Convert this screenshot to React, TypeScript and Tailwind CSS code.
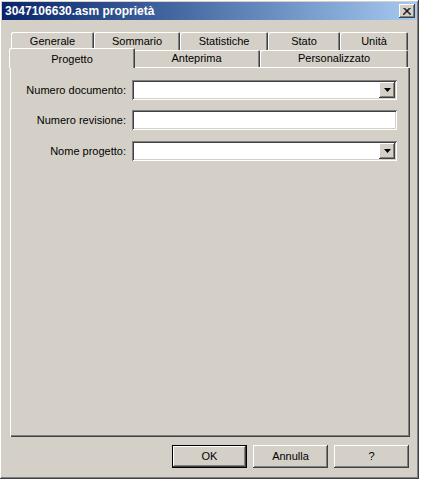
const raised =
  "shadow-[inset_-1px_-1px_#404040,inset_1px_1px_#ffffff,inset_-2px_-2px_#808080,inset_2px_2px_#d4d0c8]";
const sunken =
  "shadow-[inset_1px_1px_#808080,inset_-1px_-1px_#ffffff,inset_2px_2px_#404040,inset_-2px_-2px_#d4d0c8]";
const tabEdge =
  "shadow-[inset_1px_1px_#ffffff,inset_-1px_0_#404040,inset_-2px_0_#808080]";

const backRow = [
  { label: "Generale", w: "w-[83px]" },
  { label: "Sommario", w: "w-[86px]" },
  { label: "Statistiche", w: "w-[88px]" },
  { label: "Stato", w: "w-[72px]" },
  { label: "Unità", w: "w-[68px]" },
];

function Arrow() {
  return (
    <svg width="7" height="4" viewBox="0 0 7 4">
      <polygon points="0,0 7,0 3.5,4" fill="#000" />
    </svg>
  );
}

function Field({ combo }: { combo?: boolean }) {
  return (
    <div className={`w-[265px] h-[20px] bg-white flex justify-end p-[2px] ${sunken}`}>
      {combo && (
        <div className={`w-[16px] h-[16px] bg-[#d4d0c8] flex items-center justify-center ${raised}`}>
          <Arrow />
        </div>
      )}
    </div>
  );
}

function Row({ label, combo, className }: { label: string; combo?: boolean; className?: string }) {
  return (
    <div className={`flex items-center gap-[6px] ${className ?? ""}`}>
      <div className="w-[116px] text-right">{label}</div>
      <Field combo={combo} />
    </div>
  );
}

function Button({ children, isDefault }: { children: React.ReactNode; isDefault?: boolean }) {
  const edge = isDefault
    ? "shadow-[inset_0_0_0_1px_#000000,inset_-2px_-2px_#404040,inset_2px_2px_#ffffff,inset_-3px_-3px_#808080]"
    : raised;
  return (
    <div className={`w-[75px] h-[23px] bg-[#d4d0c8] flex items-center justify-center ${edge}`}>
      {children}
    </div>
  );
}

export default function App() {
  return (
    <div className="w-[423px] h-[483px] bg-white font-['Liberation_Sans',Arial,sans-serif] text-[11px] text-black">
      <div className={`w-[419px] h-[479px] bg-[#d4d0c8] pt-[2px] ${raised}`}>
        {/* Title bar */}
        <div className="mx-[2px] h-[18px] bg-linear-to-r from-[#0a246a] to-[#a6caf0] flex items-center pl-[3px] pr-[2px]">
          <span className="text-white font-bold text-[12px] flex-1">3047106630.asm proprietà</span>
          <div className={`w-[16px] h-[14px] bg-[#d4d0c8] flex items-center justify-center ${raised}`}>
            <svg width="8" height="7" viewBox="0 0 8 7">
              <path d="M0.5 0 L7.5 7 M1.5 0 L8.5 7 M7.5 0 L0.5 7 M6.5 0 L-0.5 7" stroke="#000" strokeWidth="1" />
            </svg>
          </div>
        </div>

        {/* Tabs */}
        <div className="mt-[12px] pl-[11px]">
          <div className="flex h-[18px]">
            {backRow.map((t) => (
              <div key={t.label} className={`${t.w} h-[18px] rounded-t-[2px] flex items-center justify-center ${tabEdge}`}>
                {t.label}
              </div>
            ))}
          </div>
          <div className="flex items-end h-[17px]">
            <div className={`relative z-10 w-[126px] h-[20px] -mx-[2px] -mb-px bg-[#d4d0c8] rounded-t-[2px] flex justify-center pt-[3px] ${tabEdge}`}>
              Progetto
            </div>
            <div className={`w-[127px] h-[17px] rounded-t-[2px] flex items-center justify-center ${tabEdge}`}>
              Anteprima
            </div>
            <div className={`w-[148px] h-[17px] rounded-t-[2px] flex items-center justify-center ${tabEdge}`}>
              Personalizzato
            </div>
          </div>
        </div>

        {/* Panel */}
        <div className="ml-[10px] w-[400px] h-[370px] pt-[13px] shadow-[inset_1px_1px_#ffffff,inset_-1px_-1px_#404040,inset_-2px_-2px_#808080]">
          <Row label="Numero documento:" combo />
          <Row label="Numero revisione:" className="mt-[10px]" />
          <Row label="Nome progetto:" combo className="mt-[11px]" />
        </div>

        {/* Buttons */}
        <div className="mt-[8px] flex justify-end gap-[6px] pr-[10px]">
          <Button isDefault>OK</Button>
          <Button>Annulla</Button>
          <Button>?</Button>
        </div>
      </div>
    </div>
  );
}
